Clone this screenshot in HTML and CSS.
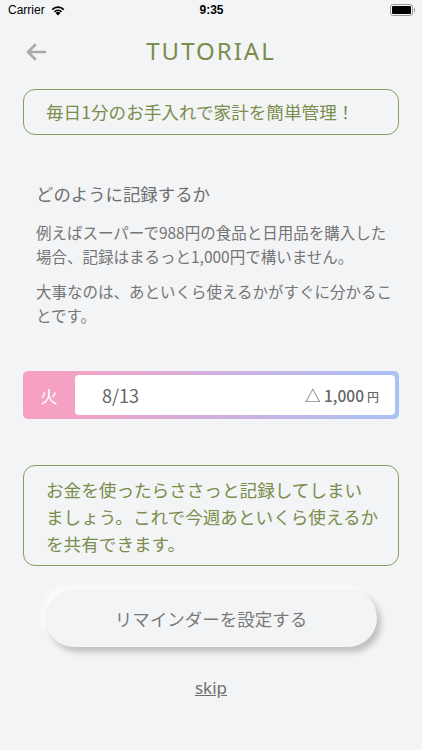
FILE: index.html
```html
<!DOCTYPE html>
<html lang="ja">
<head>
    <meta charset="UTF-8">
    <meta name="viewport" content="width=device-width, initial-scale=1.0">
    <title>Tutorial</title>
    <link rel="stylesheet" href="styles.css">
</head>
<body>
    <div class="status-bar">
        <div class="status-left">
            Carrier
            <svg class="wifi" width="16" height="12" viewBox="0 0 16 12">
                <path d="M8 11.5 L5.6 9 A3.4 3.4 0 0 1 10.4 9 Z" fill="#000"/>
                <path d="M3.9 7.3 A5.8 5.8 0 0 1 12.1 7.3 L10.9 8.5 A4.1 4.1 0 0 0 5.1 8.5 Z" fill="#000"/>
                <path d="M1.6 5 A9 9 0 0 1 14.4 5 L13.2 6.2 A7.3 7.3 0 0 0 2.8 6.2 Z" fill="#000"/>
            </svg>
        </div>
        <div class="status-time">9:35</div>
        <div class="status-right">
            <div class="battery"><div class="battery-level"></div></div>
            <div class="battery-cap"></div>
        </div>
    </div>

    <div class="header">
        <svg class="back" width="22" height="18" viewBox="0 0 22 18">
            <path d="M20 9 H3 M10 2 L3 9 L10 16" fill="none" stroke="#aaaaaa" stroke-width="2.6" stroke-linecap="round" stroke-linejoin="round"/>
        </svg>
        <h1>TUTORIAL</h1>
    </div>

    <div class="content">
        <div class="note note-single">毎日1分のお手入れで家計を簡単管理！</div>

        <div class="explain">
            <h2>どのように記録するか</h2>
            <p>例えばスーパーで988円の食品と日用品を購入した場合、記録はまるっと1,000円で構いません。</p>
            <p>大事なのは、あといくら使えるかがすぐに分かることです。</p>
        </div>

        <div class="record">
            <div class="record-day">火</div>
            <div class="record-body">
                <span class="record-date">8/13</span>
                <span class="record-amount">△ 1,000<small>円</small></span>
            </div>
        </div>

        <div class="note note-multi">お金を使ったらささっと記録してしまい<br>ましょう。これで今週あといくら使えるか<br>を共有できます。</div>

        <button class="reminder">リマインダーを設定する</button>
        <a class="skip" href="#">skip</a>
    </div>
</body>
</html>
```

FILE: styles.css
```css
body {
    margin: 0;
    padding: 0;
    background: #f3f4f6;
    font-family: "Noto Sans CJK JP", "Noto Sans", sans-serif;
    color: #6e6e6e;
    width: 422px;
    height: 750px;
    overflow: hidden;
}

.status-bar {
    height: 20px;
    display: flex;
    align-items: center;
    justify-content: space-between;
    padding: 0 7px 0 8px;
    font-family: "Liberation Sans", sans-serif;
    font-size: 12px;
    color: #000;
}

.status-left {
    display: flex;
    align-items: center;
    gap: 5px;
    width: 100px;
}

.status-time {
    font-weight: bold;
    font-size: 12px;
}

.status-right {
    width: 100px;
    display: flex;
    justify-content: flex-end;
    align-items: center;
}

.battery {
    width: 19px;
    height: 8px;
    border: 1px solid #999;
    border-radius: 3px;
    padding: 1px;
}

.battery-level {
    width: 100%;
    height: 100%;
    background: #000;
    border-radius: 1px;
}

.battery-cap {
    width: 1.5px;
    height: 4px;
    background: #999;
    margin-left: 1px;
    border-radius: 0 1px 1px 0;
}

.header {
    position: relative;
    height: 44px;
    margin-top: 8px;
    display: flex;
    align-items: center;
    justify-content: center;
}

.back {
    position: absolute;
    left: 25px;
    top: 15px;
}

h1 {
    margin: 0;
    font-family: "Noto Sans", sans-serif;
    font-weight: normal;
    font-size: 24px;
    letter-spacing: 2px;
    color: #7b8c4b;
}

.content {
    padding: 0 23px;
    display: flex;
    flex-direction: column;
}

.note {
    border: 1.5px solid #8a9964;
    border-radius: 12px;
    color: #7b8c4b;
    font-size: 17.6px;
}

.note-single {
    margin-top: 17px;
    height: 44px;
    line-height: 44px;
    padding: 0 22px;
}

.note-multi {
    margin-top: 46px;
    padding: 10px 8px 8px 22px;
    line-height: 27px;
    white-space: nowrap;
}

.explain {
    margin-top: 47px;
    padding: 0 0 0 13px;
}

h2 {
    margin: 0;
    font-weight: normal;
    font-size: 17.4px;
    line-height: 24px;
    color: #6e6e6e;
}

.explain p {
    margin: 0;
    font-size: 15.5px;
    line-height: 24px;
    color: #757575;
}

.explain p:first-of-type {
    margin-top: 14px;
}

.explain p + p {
    margin-top: 11px;
}

.record {
    margin-top: 44px;
    height: 48px;
    display: flex;
    padding: 4px 4px 4px 0;
    box-sizing: border-box;
    border-radius: 5px;
    background: linear-gradient(to right, #f89fc0, #f2a3c6 15%, #d7aedb 45%, #a9c2f6);
}

.record-day {
    width: 52px;
    display: flex;
    align-items: center;
    justify-content: center;
    color: #fff;
    font-size: 17px;
}

.record-body {
    flex: 1;
    background: #fff;
    border-radius: 4px;
    display: flex;
    align-items: center;
    justify-content: space-between;
    padding: 0 16px 0 27px;
}

.record-date {
    font-size: 18px;
    color: #666;
}

.record-amount {
    font-size: 15.5px;
    font-weight: 500;
    color: #666;
}

.record-amount small {
    font-size: 12px;
    margin-left: 3px;
}

.reminder {
    margin: 23px 22px 0 22px;
    height: 58px;
    border: none;
    border-radius: 29px;
    background: #f3f4f6;
    box-shadow: 4px 5px 6px rgba(0, 0, 0, 0.22), -3px -3px 6px rgba(255, 255, 255, 0.9);
    font-family: "Noto Sans CJK JP", sans-serif;
    font-size: 17.5px;
    color: #7a7a7a;
}

.skip {
    margin-top: 29px;
    align-self: center;
    font-family: "Noto Sans", sans-serif;
    font-size: 17px;
    color: #6e6e6e;
    text-decoration: underline;
}
```
